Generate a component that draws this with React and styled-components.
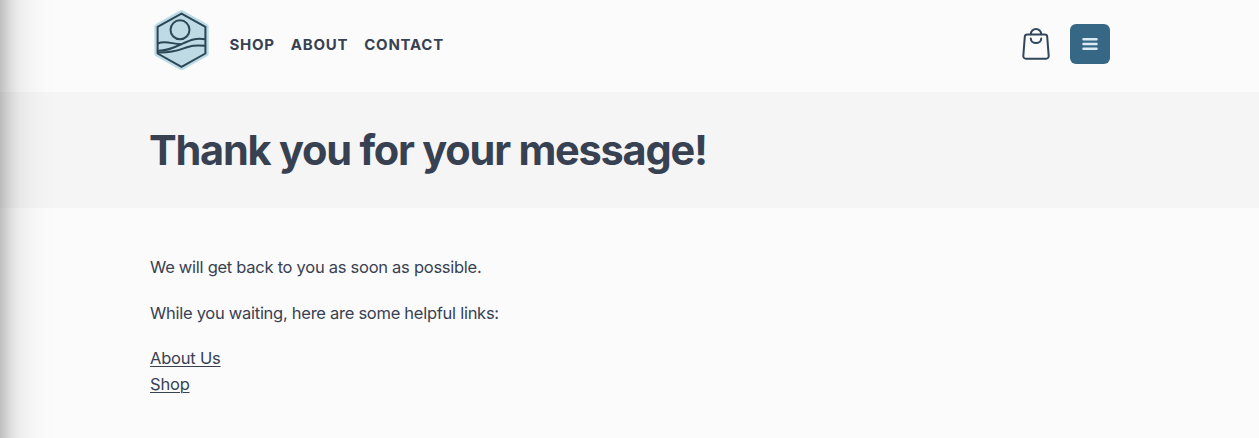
import React from 'react';
import styled, { createGlobalStyle } from 'styled-components';

const GlobalStyle = createGlobalStyle`
  * { box-sizing: border-box; }
  html, body { margin: 0; background: #fbfbfb; }
  body { overflow: hidden; font-family: Inter, "Liberation Sans", sans-serif; color: #384152; }
`;

const Page = styled.div`
  position: relative;
  min-height: 100vh;
  background: #fbfbfb;
`;

const EdgeShadow = styled.div`
  position: absolute;
  inset: 0 auto 0 0;
  width: 56px;
  pointer-events: none;
  background: linear-gradient(
    to right,
    rgba(0, 0, 0, 0.24) 0,
    rgba(0, 0, 0, 0.18) 5px,
    rgba(0, 0, 0, 0.105) 12px,
    rgba(0, 0, 0, 0.055) 20px,
    rgba(0, 0, 0, 0.022) 32px,
    rgba(0, 0, 0, 0.008) 44px,
    transparent 56px
  );
`;

const Container = styled.div`
  width: 960px;
  margin: 0 auto 0 150px;
`;

const HeaderBar = styled(Container).attrs({ as: 'header' })`
  height: 92px;
  padding-top: 10px;
  display: flex;
  align-items: flex-start;
`;

const Logo = styled.svg`
  width: 62px;
  height: 60px;
  flex: none;
`;

const Nav = styled.nav`
  display: flex;
  gap: 16px;
  margin: 24px auto 0 17.5px;
`;

const NavLink = styled.a`
  font-size: 15px;
  line-height: 22px;
  font-weight: 650;
  letter-spacing: 0.75px;
  text-transform: uppercase;
  color: #384152;
`;

const Actions = styled.div`
  display: flex;
  align-items: center;
  gap: 20px;
  margin-top: 14px;
`;

const BagIcon = styled.svg`
  width: 28px;
  height: 34px;
`;

const MenuButton = styled.button`
  width: 40px;
  height: 40px;
  padding: 0;
  border: 0;
  border-radius: 6px;
  background: #366885;
  display: grid;
  place-items: center;
`;

const Banner = styled.section`
  height: 116px;
  background: #f5f5f5;
`;

const Title = styled.h1`
  margin: 0 0 0 -1px;
  padding-top: 33px;
  font-size: 41.5px;
  line-height: 50px;
  font-weight: 700;
  letter-spacing: -1.23px;
  white-space: nowrap;
`;

const Content = styled(Container).attrs({ as: 'main' })`
  padding-top: 46px;
  font-size: 16.5px;
  line-height: 26px;
  letter-spacing: -0.27px;
`;

const Paragraph = styled.p`
  margin: 0 0 20px;
`;

const Links = styled.div`
  display: flex;
  flex-direction: column;
  align-items: flex-start;
  margin-top: -1px;
`;

const TextLink = styled.a`
  color: inherit;
  text-decoration: underline;
  text-decoration-thickness: 1px;
  text-underline-offset: 2px;
  letter-spacing: -0.2px;
`;

export default function App() {
  return (
    <Page>
      <GlobalStyle />
      <HeaderBar>
        <Logo viewBox="0 0 62 60" fill="none">
          <path
            d="M31.5 3.4 55.5 16.8v26.7L31.5 57 7.5 43.5V16.8Z"
            fill="#bddae5"
            stroke="#bddae5"
            strokeWidth="6.4"
            strokeLinejoin="round"
          />
          <g stroke="#2b4655" strokeWidth="2" strokeLinejoin="round">
            <path d="M31.5 3.6 55.4 16.8v26.7L31.5 56.8 7.6 43.5V16.8Z" />
            <circle cx="30" cy="19.8" r="9.5" />
            <path d="M7.6 33.500C16 29.800 23 34.600 31.500 34.200" />
            <path d="M7.6 40.800C16 41 22 38.600 31.500 34.200S44 28 55.400 29.200" />
            <path d="M7.600 42.400C18 42.800 24 41.800 33 38.600S45 35 55.400 35.800" />
          </g>
        </Logo>
        <Nav>
          <NavLink>Shop</NavLink>
          <NavLink>About</NavLink>
          <NavLink>Contact</NavLink>
        </Nav>
        <Actions>
          <BagIcon viewBox="0 0 28 34" fill="none" stroke="#31465a" strokeWidth="2" strokeLinecap="round">
            <path d="M5.200 7.500h17.600a2.400 2.400 0 0 1 2.400 2.200l1.500 19.200a2.600 2.600 0 0 1-2.600 2.800H3.900a2.600 2.600 0 0 1-2.600-2.800L2.800 9.700A2.400 2.400 0 0 1 5.200 7.500Z" />
            <path d="M8.800 7.200a5.200 5.200 0 0 1 10.400 0" />
            <path d="M8.800 11.500a5.200 4.500 0 0 0 10.400 0" />
          </BagIcon>
          <MenuButton aria-label="Menu">
            <svg width="16" height="14" viewBox="0 0 16 14" stroke="#dcebf3" strokeWidth="2.500" strokeLinecap="round">
              <path d="M1.500 2.200h13M1.500 7h13M1.500 11.800h13" />
            </svg>
          </MenuButton>
        </Actions>
      </HeaderBar>
      <Banner>
        <Container>
          <Title>Thank you for your message!</Title>
        </Container>
      </Banner>
      <Content>
        <Paragraph>We will get back to you as soon as possible.</Paragraph>
        <Paragraph>While you waiting, here are some helpful links:</Paragraph>
        <Links>
          <TextLink>About Us</TextLink>
          <TextLink>Shop</TextLink>
        </Links>
      </Content>
      <EdgeShadow />
    </Page>
  );
}
